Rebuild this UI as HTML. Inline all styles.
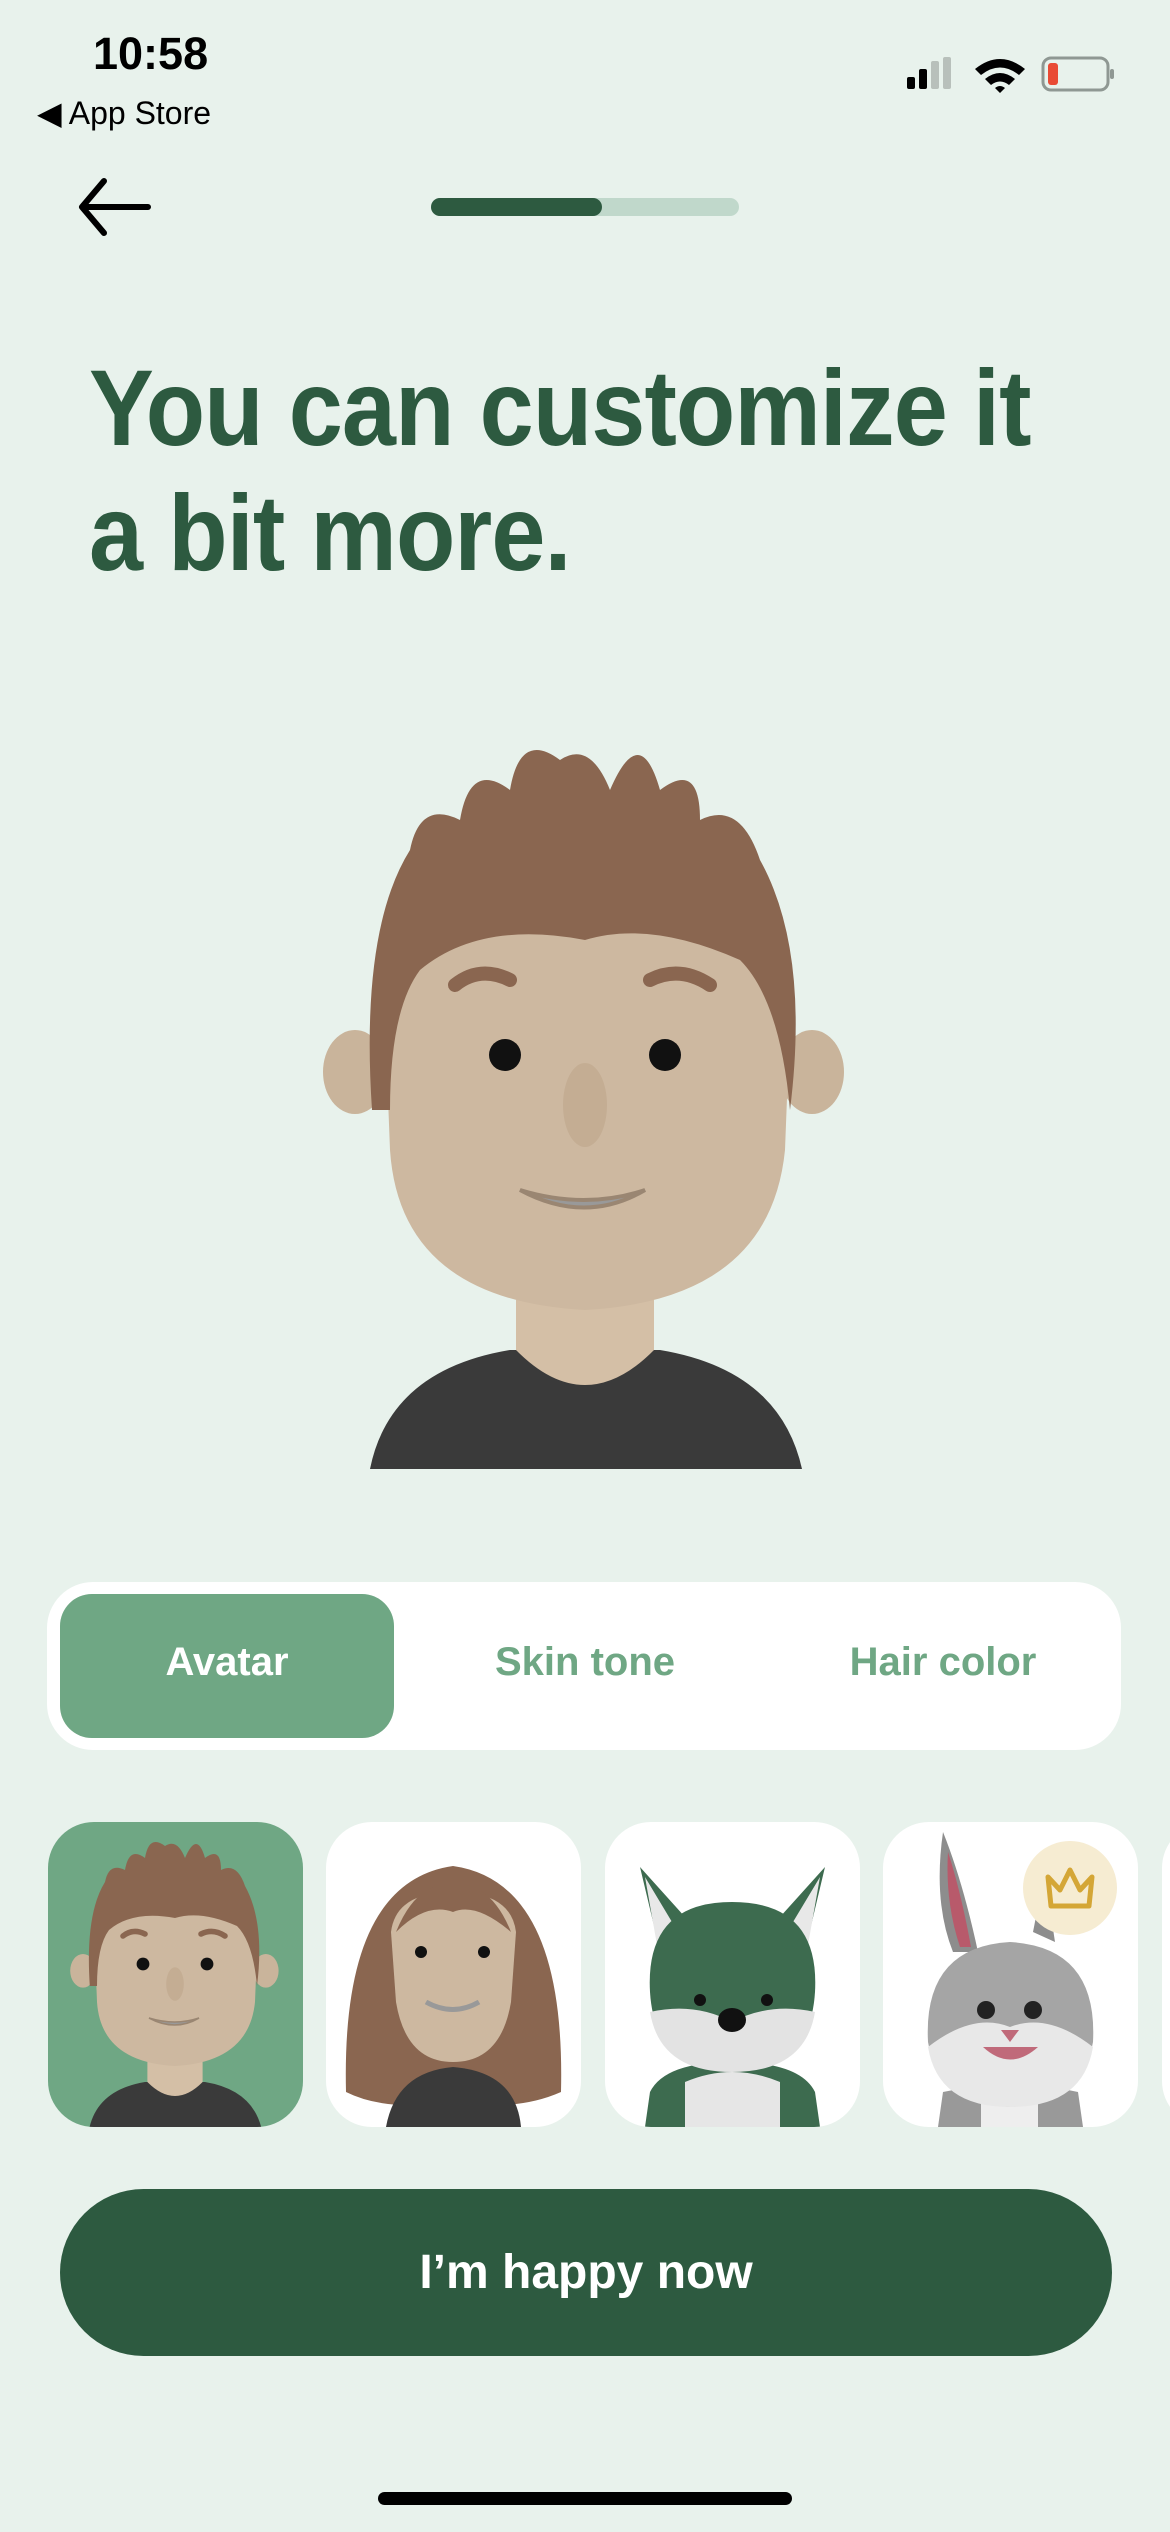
<!DOCTYPE html>
<html><head><meta charset="utf-8"><style>
*{margin:0;padding:0;box-sizing:border-box}
body{width:1170px;height:2532px;background:#e8f2ec;position:relative;overflow:hidden;font-family:"Liberation Sans",sans-serif}
.a{position:absolute}
.h1{left:89px;top:345px;font-size:108px;font-weight:bold;color:#2d5a40;line-height:125px;letter-spacing:-1px;transform:scaleX(0.9);transform-origin:0 0;white-space:nowrap}
.seg{left:47px;top:1582px;width:1074px;height:168px;background:#fff;border-radius:46px}
.act{left:60px;top:1594px;width:334px;height:144px;background:#6fa784;border-radius:32px}
.lbl{top:1640px;font-size:40px;font-weight:bold;color:#6fa784;width:300px;text-align:center}
.card{top:1822px;width:255px;height:305px;border-radius:46px;background:#fff;overflow:hidden}
.btn{left:60px;top:2189px;width:1052px;height:167px;border-radius:84px;background:#2d5a40;color:#fff;font-size:48px;font-weight:bold;text-align:center;line-height:167px}
</style></head><body>
<svg width="0" height="0" style="position:absolute"><defs>
<symbol id="boy" viewBox="300 720 570 760">
<path d="M370 1469 Q390 1370 510 1350 L660 1350 Q780 1370 802 1469Z" fill="#3a3a3a"/>
<path d="M516 1300 L516 1350 Q585 1420 654 1350 L654 1300Z" fill="#d4bfa6"/>
<ellipse cx="355" cy="1072" rx="32" ry="42" fill="#c9b49b"/>
<ellipse cx="812" cy="1072" rx="32" ry="42" fill="#c9b49b"/>
<path d="M385 1020 Q380 900 470 880 L700 880 Q795 900 790 1020 L785 1150 Q770 1300 585 1310 Q400 1300 390 1150Z" fill="#cdb8a0"/>
<path d="M372 1110 Q360 930 410 850 Q420 800 460 820 Q470 760 510 790 Q520 730 560 760 Q590 740 610 790 Q640 720 660 790 Q700 760 700 820 Q740 800 760 860 Q810 950 790 1110 Q780 1000 740 960 Q650 920 585 940 Q480 920 420 970 Q390 1010 390 1110Z" fill="#8a6650"/>
<path d="M455 985 Q480 965 510 980" stroke="#8a6650" stroke-width="14" fill="none" stroke-linecap="round"/>
<path d="M650 980 Q680 965 710 985" stroke="#8a6650" stroke-width="14" fill="none" stroke-linecap="round"/>
<circle cx="505" cy="1055" r="16" fill="#111"/><circle cx="665" cy="1055" r="16" fill="#111"/>
<ellipse cx="585" cy="1105" rx="22" ry="42" fill="#c4ad93"/>
<path d="M520 1190 Q585 1225 645 1190 Q585 1210 520 1190Z" fill="#999" stroke="#9a8672" stroke-width="4"/>
</symbol></defs></svg>

<div class="a" style="left:93px;top:28px;font-size:45px;font-weight:bold;color:#000">10:58</div>
<div class="a" style="left:37px;top:94px;font-size:32px;color:#000">&#9664; App Store</div>
<svg class="a" style="left:905px;top:55px" width="210" height="40">
<rect x="2" y="22" width="8" height="12" rx="2"/><rect x="14" y="14" width="8" height="20" rx="2"/>
<rect x="26" y="6" width="8" height="28" rx="2" fill="#b8c0bb"/><rect x="38" y="2" width="8" height="32" rx="2" fill="#b8c0bb"/>
<path d="M70 14 Q95 -6 120 14 L114 20 Q95 5 76 20Z M80 24 Q95 12 110 24 L104 30 Q95 23 86 30Z M90 33 L95 38 L100 33 Q95 29 90 33Z" fill="#000"/>
<rect x="138" y="3" width="65" height="32" rx="8" fill="none" stroke="#8f9893" stroke-width="3"/>
<rect x="143" y="8" width="10" height="22" rx="3" fill="#e94b35"/><rect x="205" y="14" width="4" height="10" rx="2" fill="#8f9893"/>
</svg>
<svg class="a" style="left:78px;top:178px" width="75" height="60"><path d="M70 29 L6 29 M26 3 L4 29 L26 55" stroke="#000" stroke-width="6" fill="none" stroke-linecap="round" stroke-linejoin="round"/></svg>
<div class="a" style="left:431px;top:198px;width:308px;height:18px;border-radius:9px;background:#c0d8cb"></div>
<div class="a" style="left:431px;top:198px;width:171px;height:18px;border-radius:9px;background:#2d5a40"></div>
<div class="a h1">You can customize it<br>a bit more.</div>
<svg class="a" style="left:300px;top:720px" width="570" height="760"><use href="#boy"/></svg>
<div class="a seg"></div><div class="a act"></div>
<div class="a lbl" style="left:77px;color:#fff">Avatar</div>
<div class="a lbl" style="left:435px">Skin tone</div>
<div class="a lbl" style="left:793px">Hair color</div>
<div class="a card" style="left:48px;background:#6fa784"><svg width="255" height="305" viewBox="0 0 255 305"><g transform="translate(13,8) scale(0.4)"><use href="#boy" width="570" height="760"/></g></svg></div>
<div class="a card" style="left:326px"><svg width="255" height="305" viewBox="0 0 255 305">
<path d="M20 270 Q15 60 127 44 Q240 60 235 270 Q190 290 127 280 Q60 290 20 270Z" fill="#8a6650"/>
<path d="M60 305 Q70 250 127 245 Q190 250 195 305Z" fill="#3a3a3a"/>
<path d="M65 110 Q70 70 127 70 Q185 70 190 110 L185 180 Q175 240 127 240 Q80 240 70 180Z" fill="#cdb8a0"/>
<path d="M70 110 Q90 60 127 62 Q165 60 185 110 Q150 80 127 90 Q100 80 70 110Z" fill="#8a6650"/>
<circle cx="95" cy="130" r="6" fill="#111"/><circle cx="158" cy="130" r="6" fill="#111"/>
<path d="M100 180 Q127 195 153 180" stroke="#999" stroke-width="5" fill="none"/></svg></div>
<div class="a card" style="left:605px"><svg width="255" height="305" viewBox="0 0 255 305">
<path d="M40 305 L45 270 Q60 240 127 240 Q195 240 210 270 L215 305Z" fill="#3d6b4f"/>
<path d="M80 305 L80 260 Q127 240 175 260 L175 305Z" fill="#e6e6e6"/>
<path d="M35 45 L80 95 L60 150Z M220 45 L175 95 L195 150Z" fill="#3d6b4f"/>
<path d="M40 55 L70 105 L55 140Z M215 55 L185 105 L200 140Z" fill="#e8e8e8"/>
<path d="M45 170 Q40 80 127 80 Q215 80 210 170 Q205 250 127 250 Q50 250 45 170Z" fill="#3d6b4f"/>
<path d="M45 190 Q90 180 127 200 Q165 180 210 190 Q200 250 127 250 Q55 250 45 190Z" fill="#e3e3e3"/>
<circle cx="95" cy="178" r="6" fill="#111"/><circle cx="162" cy="178" r="6" fill="#111"/>
<ellipse cx="127" cy="198" rx="14" ry="12" fill="#111"/></svg></div>
<div class="a card" style="left:883px"><svg width="255" height="305" viewBox="0 0 255 305">
<path d="M60 10 Q50 80 70 130 L95 130 Q80 60 60 10Z" fill="#8d8d8d"/><path d="M150 110 Q160 60 160 40 L172 120Z" fill="#8d8d8d"/>
<path d="M65 30 Q62 80 77 125 L88 125 Q78 70 65 30Z" fill="#b85a6b"/>
<path d="M55 305 L60 270 Q127 255 195 270 L200 305Z" fill="#999"/><path d="M98 305 L98 270 L155 270 L155 305Z" fill="#eee"/>
<path d="M45 220 Q40 125 127 120 Q215 125 210 220 Q200 280 127 285 Q55 280 45 220Z" fill="#a5a5a5"/>
<path d="M45 225 Q90 190 127 205 Q165 190 210 225 Q200 285 127 285 Q55 285 45 225Z" fill="#e8e8e8"/>
<circle cx="103" cy="188" r="9" fill="#222"/><circle cx="150" cy="188" r="9" fill="#222"/>
<path d="M118 208 L136 208 L127 220Z" fill="#c06a7a"/><path d="M100 225 Q127 250 155 225Z" fill="#c06a7a"/>
<circle cx="187" cy="66" r="47" fill="#f6ecd2"/>
<path d="M168 84 L165 55 L177 68 L187 48 L197 68 L209 55 L206 84Z" fill="none" stroke="#d4a636" stroke-width="5" stroke-linejoin="round"/></svg></div>
<div class="a card" style="left:1162px"></div>
<div class="a btn">I’m happy now</div>
<div class="a" style="left:378px;top:2492px;width:414px;height:13px;border-radius:7px;background:#000"></div>
</body></html>
